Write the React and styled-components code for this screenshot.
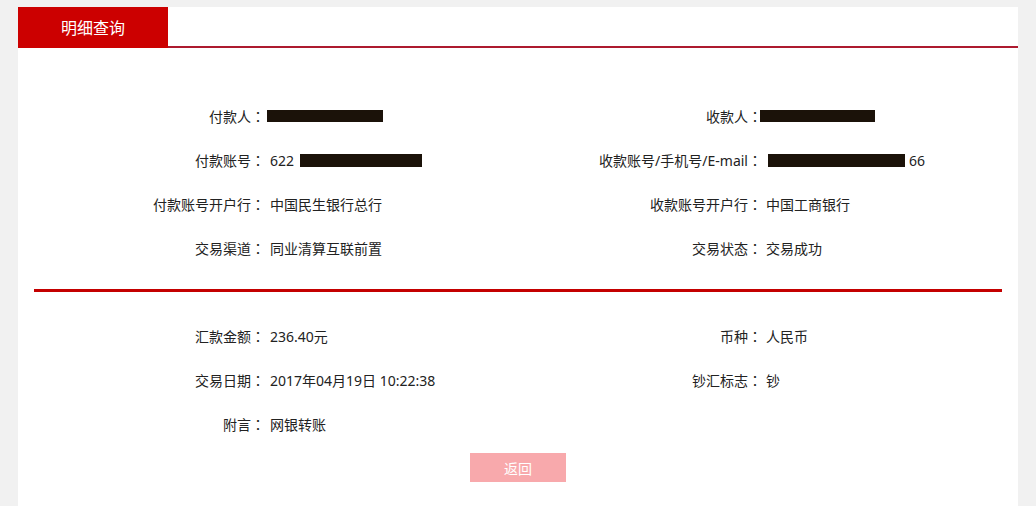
import React from "react";
import styled, { createGlobalStyle } from "styled-components";

const GlobalStyle = createGlobalStyle`
  html, body {
    margin: 0;
    padding: 0;
    background: #f1f1f1;
    font-family: "Noto Sans", "Noto Sans CJK SC", sans-serif;
    color: #222;
  }
`;

const Page = styled.div`
  padding: 7px 18px 0 18px;
  min-height: 499px;
`;

const Card = styled.div`
  width: 1000px;
  background: #fff;
  min-height: 499px;
  box-sizing: border-box;
`;

const Header = styled.div`
  display: flex;
  height: 41px;
  box-sizing: border-box;
  border-bottom: 2px solid #ad1a2f;
`;

const Tab = styled.div`
  width: 150px;
  height: 41px;
  margin-bottom: -2px;
  background: #cc0000;
  color: #fff;
  font-size: 16px;
  display: flex;
  align-items: center;
  justify-content: center;
  padding-bottom: 1px;
  box-sizing: border-box;
`;

const Body = styled.div`
  padding: 0 16px;
  display: flex;
  flex-direction: column;
`;

const Section = styled.div`
  display: grid;
  grid-template-columns: 231px 248px 249px 1fr;
  grid-auto-rows: 44px;
  padding-top: ${(p) => p.$top}px;
  padding-bottom: ${(p) => p.$bottom}px;
  font-size: 14px;
`;

const LabelCell = styled.div`
  display: flex;
  align-items: center;
  justify-content: flex-end;
  white-space: nowrap;
`;

const Colon = styled.span`
  display: inline-block;
  width: 14px;
  text-align: center;
  font-family: "Noto Sans CJK TC", sans-serif;
`;

const Label = ({ children }) => (
  <LabelCell>
    {children}
    <Colon>：</Colon>
  </LabelCell>
);

const Value = styled.div`
  display: flex;
  align-items: center;
  padding-left: ${(p) => p.$pad}px;
  white-space: nowrap;
`;

const Mask = styled.span`
  display: inline-block;
  width: ${(p) => p.$w}px;
  height: ${(p) => p.$h}px;
  background: #1b1209;
  margin-left: ${(p) => p.$ml || 0}px;
  margin-right: ${(p) => p.$mr || 0}px;
`;

const Divider = styled.div`
  height: 3px;
  background: #c40000;
`;

const Actions = styled.div`
  display: flex;
  justify-content: center;
  padding-top: 7px;
`;

const Button = styled.button`
  width: 96px;
  height: 29px;
  border: none;
  background: #f8a9ac;
  color: #fff;
  font-family: inherit;
  font-size: 14px;
  padding: 0;
  cursor: pointer;
`;

export default function App() {
  return (
    <>
      <GlobalStyle />
      <Page>
        <Card>
          <Header>
            <Tab>明细查询</Tab>
          </Header>
          <Body>
            <Section $top={46} $bottom={19}>
              <Label>付款人</Label>
              <Value $pad={5}>
                <Mask $w={116} $h={12} $ml={-3} />
              </Value>
              <Label>收款人</Label>
              <Value $pad={4}>
                <Mask $w={115} $h={12} $ml={-6} />
              </Value>

              <Label>付款账号</Label>
              <Value $pad={5}>
                622
                <Mask $w={122} $h={13} $ml={6} />
              </Value>
              <Label>收款账号/手机号/E-mail</Label>
              <Value $pad={4}>
                <Mask $w={137} $h={13} $ml={2} $mr={4} />
                66
              </Value>

              <Label>付款账号开户行</Label>
              <Value $pad={5}>中国民生银行总行</Value>
              <Label>收款账号开户行</Label>
              <Value $pad={4}>中国工商银行</Value>

              <Label>交易渠道</Label>
              <Value $pad={5}>同业清算互联前置</Value>
              <Label>交易状态</Label>
              <Value $pad={4}>交易成功</Value>
            </Section>
            <Divider />
            <Section $top={22} $bottom={0}>
              <Label>汇款金额</Label>
              <Value $pad={5}>236.40元</Value>
              <Label>币种</Label>
              <Value $pad={4}>人民币</Value>

              <Label>交易日期</Label>
              <Value $pad={5}>2017年04月19日 10:22:38</Value>
              <Label>钞汇标志</Label>
              <Value $pad={4}>钞</Value>

              <Label>附言</Label>
              <Value $pad={5}>网银转账</Value>
            </Section>
            <Actions>
              <Button>返回</Button>
            </Actions>
          </Body>
        </Card>
      </Page>
    </>
  );
}
